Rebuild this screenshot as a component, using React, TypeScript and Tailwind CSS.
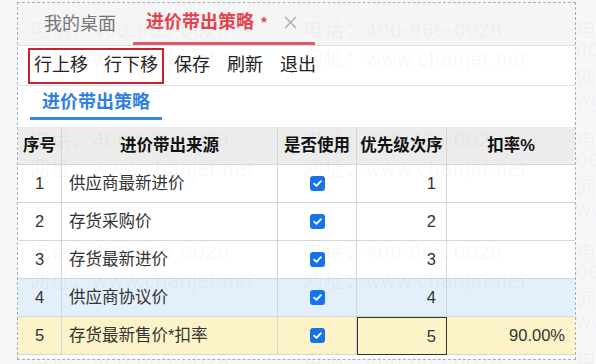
const rows = [
  { no: 1, name: '供应商最新进价', order: 1, rate: '', tone: 'plain' },
  { no: 2, name: '存货采购价', order: 2, rate: '', tone: 'plain' },
  { no: 3, name: '存货最新进价', order: 3, rate: '', tone: 'plain' },
  { no: 4, name: '供应商协议价', order: 4, rate: '', tone: 'hover' },
  { no: 5, name: '存货最新售价*扣率', order: 5, rate: '90.00%', tone: 'current' },
]

const rowBg: Record<string, string> = {
  plain: 'bg-white',
  hover: 'bg-[#e4effc]',
  current: 'bg-[#fdf3c8]',
}

// faint watermark, repeated over the whole window
const marks = [30, 140, 252, 361].flatMap((y) =>
  [30, 303, 576].map((x) => ({ x, y })),
)

function Check() {
  return (
    <span className="flex h-[15px] w-[15px] items-center justify-center rounded-[3px] bg-[#1574ea]">
      <svg viewBox="0 0 12 12" className="h-[11px] w-[11px]">
        <path
          d="M2.3 6.2 4.9 8.6 9.7 3.4"
          fill="none"
          stroke="white"
          strokeWidth="2"
          strokeLinecap="round"
          strokeLinejoin="round"
        />
      </svg>
    </span>
  )
}

export default function App() {
  return (
    <div className="relative h-[364px] w-[596px] overflow-hidden bg-[#f6f7f9] pt-[2px] pl-[17px] font-['Liberation_Sans','Noto_Sans_CJK_SC',sans-serif] text-[#333]">
      <div className="flex h-[358px] w-[559px] flex-col border border-dashed border-[#a4adb9] bg-white">
        {/* tab strip */}
        <div className="flex h-[43px] shrink-0 items-end border-b border-[#e2e2e2] bg-[#f5f5f6]">
          <div className="flex h-full items-center pl-[26px] text-[18px] text-[#767676]">
            我的桌面
          </div>
          <div className="ml-[17px] flex h-full w-[182px] flex-col">
            <div className="flex flex-1 items-center pl-[13px] text-[18px] font-bold text-[#e6414f]">
              进价带出策略
              <span className="ml-[7px] text-[15px]">*</span>
              <svg viewBox="0 0 12 12" className="ml-[17px] h-[13px] w-[13px]">
                <path d="M1 1 11 11M11 1 1 11" stroke="#a9a9a9" strokeWidth="1.3" />
              </svg>
            </div>
            <div className="h-[3px] bg-[#e25a66]" />
          </div>
        </div>

        {/* toolbar */}
        <div className="flex h-[40px] shrink-0 items-center border-b border-[#e0e0e0] text-[18px] text-[#222]">
          <div className="ml-[10px] flex h-[36px] items-center gap-[16px] border-2 border-[#c3252c] px-[4px]">
            <span>行上移</span>
            <span>行下移</span>
          </div>
          <span className="ml-[10px]">保存</span>
          <span className="ml-[17px]">刷新</span>
          <span className="ml-[17px]">退出</span>
        </div>

        {/* sub tab */}
        <div className="flex h-[34px] shrink-0 pl-[12px]">
          <div className="flex w-[132px] flex-col">
            <div className="flex flex-1 items-center justify-center pt-[2px] text-[18px] font-bold text-[#2f7fe2]">
              进价带出策略
            </div>
            <div className="h-[3px] bg-[#3b86e0]" />
          </div>
        </div>

        {/* grid */}
        <div className="mt-[7px] grid grid-cols-[44px_216px_79px_90px_1fr] text-[16.5px]">
          {['序号', '进价带出来源', '是否使用', '优先级次序', '扣率%'].map((h, i) => (
            <div
              key={h}
              className={`flex h-[38px] items-center justify-center border-b border-[#d6d6d6] bg-[#ececec] font-bold text-[#111] ${i < 4 ? 'border-r' : ''}`}
            >
              {h}
            </div>
          ))}
          {rows.map((r) => {
            const bg = rowBg[r.tone]
            return [
              <div
                key={`n${r.no}`}
                className={`flex h-[38px] items-center justify-center border-r border-b border-[#d6d6d6] ${bg}`}
              >
                {r.no}
              </div>,
              <div
                key={`s${r.no}`}
                className={`flex h-[38px] items-center border-r border-b border-[#d6d6d6] pl-[7px] ${bg}`}
              >
                {r.name}
              </div>,
              <div
                key={`c${r.no}`}
                className={`flex h-[38px] items-center justify-center border-r border-b border-[#d6d6d6] ${bg}`}
              >
                <Check />
              </div>,
              <div
                key={`o${r.no}`}
                className={`flex h-[38px] items-center justify-end border-r border-b border-[#d6d6d6] pr-[10px] ${bg} ${r.tone === 'current' ? 'border-t border-l border-t-[#333] border-l-[#333] border-r-[#333] border-b-[#333]' : ''}`}
              >
                {r.order}
              </div>,
              <div
                key={`r${r.no}`}
                className={`flex h-[38px] items-center justify-end border-b border-[#d6d6d6] pr-[10px] ${bg}`}
              >
                {r.rate}
              </div>,
            ]
          })}
        </div>
      </div>

      {/* watermark */}
      <div className="pointer-events-none absolute inset-0 text-[20px] tracking-[1px] text-black/[0.045]">
        {marks.map((m) => (
          <div
            key={`${m.x}-${m.y}`}
            className="absolute leading-none"
            style={{ left: m.x, top: m.y - 10 }}
          >
            <div>电话：400-665-0028</div>
            <div className="mt-[9px]">网址：www.chanjet.net</div>
          </div>
        ))}
      </div>
    </div>
  )
}
